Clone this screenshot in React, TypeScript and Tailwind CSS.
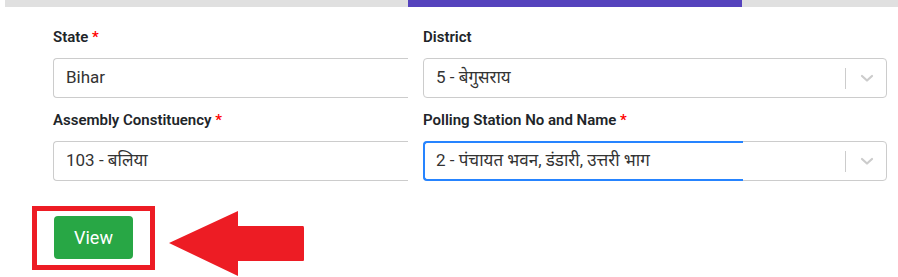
import React from "react";

const Chevron = () => (
  <svg width="14" height="10" viewBox="0 0 14 10" className="block">
    <path d="M2 3 L7 7.5 L12 3" fill="none" stroke="#cccccc" strokeWidth="2.2" strokeLinecap="round" strokeLinejoin="round" />
  </svg>
);

const Label = ({ text, req, className = "" }: { text: string; req?: boolean; className?: string }) => (
  <div className={"h-[21px] leading-[21px] text-[15px] font-semibold text-[#212529] " + className}>
    {text}
    {req && <span className="text-[#ff0000]"> *</span>}
  </div>
);

const Indicator = () => (
  <div className="flex items-center h-full">
    <div className="w-px h-[21px] bg-[#cccccc]" />
    <div className="w-[40px] flex justify-center items-center pl-[2px]">
      <Chevron />
    </div>
  </div>
);

export default function App() {
  const font = { fontFamily: "Roboto, 'Noto Sans', 'Noto Sans Devanagari', sans-serif" };
  return (
    <div className="w-[898px] h-[277px] bg-white overflow-hidden relative" style={font}>
      <div className="flex h-[7px]">
        <div className="w-[5px] bg-white" />
        <div className="w-[403px] bg-[#e0e0e0]" />
        <div className="w-[334px] bg-[#5543bd]" />
        <div className="flex-1 bg-[#e0e0e0]" />
      </div>

      <div className="pl-[53px] flex gap-[15px]">
        <div className="w-[355px]">
          <Label text="State" req className="mt-[20px]" />
          <div className="mt-[10px] h-[40px] border border-r-0 border-[#cccccc] rounded-l-[4px] flex items-center pl-[12px] text-[17px] text-[#333333]">
            Bihar
          </div>
          <Label text="Assembly Constituency" req className="mt-[12px]" />
          <div className="mt-[10px] h-[40px] border border-r-0 border-[#cccccc] rounded-l-[4px] flex items-center pl-[12px] text-[17px] text-[#333333]">
            103 - बलिया
          </div>
        </div>
        <div className="w-[464px]">
          <Label text="District" className="mt-[20px]" />
          <div className="mt-[10px] h-[40px] border border-[#cccccc] rounded-[4px] flex items-center justify-between pl-[12px] text-[17px] text-[#333333]">
            <span>5 - बेगुसराय</span>
            <Indicator />
          </div>
          <Label text="Polling Station No and Name" req className="mt-[12px]" />
          <div className="relative mt-[10px] h-[40px] border border-[#cccccc] rounded-[4px] flex items-center justify-between pl-[12px] text-[17px] text-[#333333]">
            <div className="absolute -top-[1px] -bottom-[1px] -left-[1px] w-[320px] border-2 border-r-0 border-[#2684ff] rounded-l-[4px]" />
            <span>2 - पंचायत भवन, डंडारी, उत्तरी भाग</span>
            <Indicator />
          </div>
        </div>
      </div>

      <div className="flex items-start mt-[25px] ml-[32px]">
        <div className="border-[5px] border-[#ed1c24] px-[17px] pt-[5px] pb-[6px]">
          <button className="w-[79px] h-[43px] bg-[#28a745] rounded-[4px] text-white text-[18px] font-normal leading-none">
            View
          </button>
        </div>
        <svg width="136" height="66" viewBox="0 0 136 66" className="ml-[14px] mt-[5px]">
          <path d="M0 32 L69 0 L69 15 L134 15 Q135 15 135 17 L135 49 Q135 50 134 50 L69 50 L69 65 Z" fill="#ed1c24" />
        </svg>
      </div>
    </div>
  );
}
